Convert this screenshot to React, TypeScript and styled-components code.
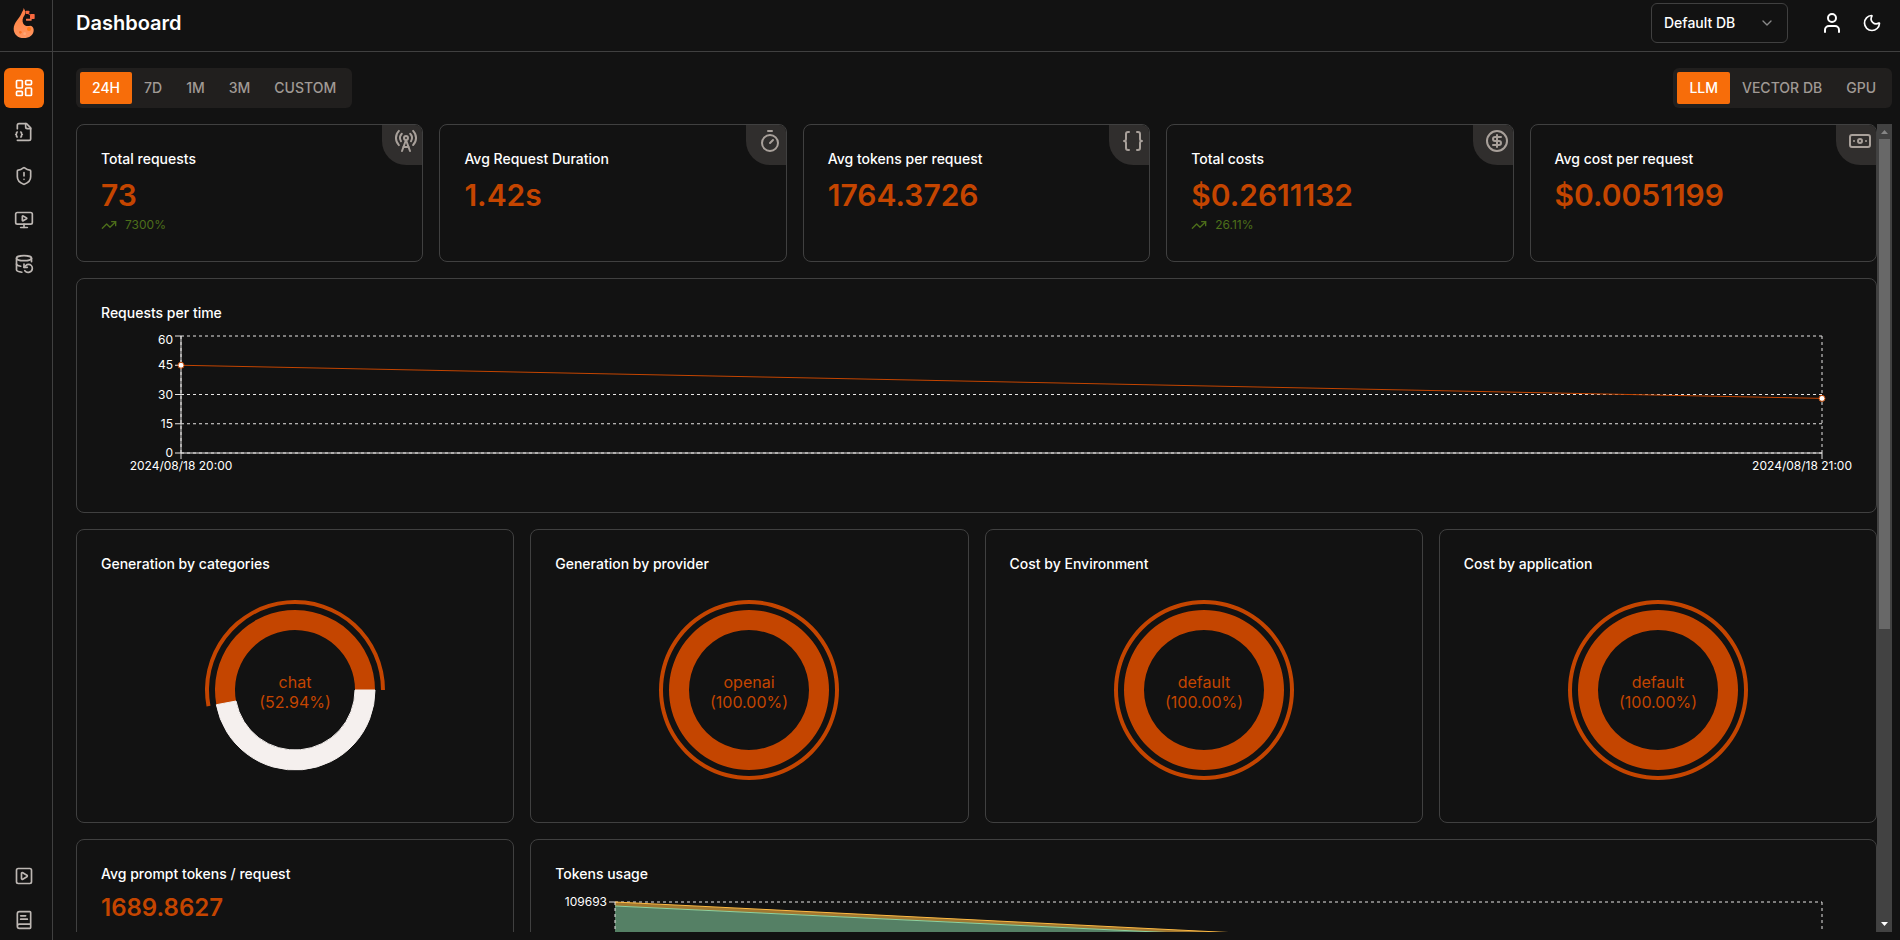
import React, { useLayoutEffect, useRef, useState } from 'react';
import styled, { createGlobalStyle, css } from 'styled-components';
import {
  Banknote,
  BookText,
  Braces,
  ChevronDown,
  CircleDollarSign,
  DatabaseBackup,
  LayoutDashboard,
  MonitorPlay,
  Moon,
  RadioTower,
  ShieldAlert,
  SquarePlay,
  Timer,
  TrendingUp,
  User,
} from 'lucide-react';

const color = {
  bg: '#121212',
  line: '#404040',
  panel: '#211f1e',
  corner: '#302e2d',
  accent: '#f76d0a',
  deep: '#c44500',
  text: '#ffffff',
  muted: '#a09a95',
  icon: '#bdb7b3',
  axis: '#e7e5e4',
  up: '#4d6f1a',
};

const GlobalStyle = createGlobalStyle`
  *, *::before, *::after { box-sizing: border-box; }
  body {
    margin: 0;
    background: ${color.bg};
    color: ${color.text};
    font-family: Inter, "Liberation Sans", sans-serif;
    font-size: 14px;
    line-height: 20px;
  }
  button, select { font: inherit; }
  h1, h2, p { margin: 0; }
  svg { display: block; }
`;

const Shell = styled.div`
  display: flex;
  height: 100vh;
  overflow: hidden;
`;

const Sidebar = styled.aside`
  flex: none;
  width: 52px;
  display: flex;
  flex-direction: column;
`;

const LogoLink = styled.a`
  flex: none;
  height: 52px;
  padding: 7px 12px 0;
  border-bottom: 1px solid ${color.line};
`;

const Nav = styled.nav`
  flex: 1;
  display: flex;
  flex-direction: column;
  gap: 4px;
  padding: 16px 4px 0;
`;

const NavSpacer = styled.div`
  flex: 1;
`;

const NavLink = styled.a<{ $active?: boolean }>`
  width: 40px;
  height: 40px;
  display: flex;
  align-items: center;
  justify-content: center;
  border-radius: 6px;
  color: ${(p) => (p.$active ? '#fff' : color.icon)};
  background: ${(p) => (p.$active ? color.accent : 'transparent')};
`;

const Main = styled.main`
  flex: 1;
  min-width: 0;
  display: flex;
  flex-direction: column;
  border-left: 1px solid ${color.line};
`;

const Header = styled.header`
  flex: none;
  height: 52px;
  display: flex;
  align-items: center;
  padding: 0 8px 5px 23px;
  border-bottom: 1px solid ${color.line};
`;

const PageTitle = styled.h1`
  flex: 1;
  font-size: 20px;
  line-height: 28px;
  font-weight: 600;
`;

const SelectBox = styled.label`
  position: relative;
  width: 137px;
  margin-right: 24px;

  select {
    width: 100%;
    height: 40px;
    padding: 0 32px 0 12px;
    appearance: none;
    color: ${color.text};
    background: ${color.bg};
    border: 1px solid ${color.line};
    border-radius: 6px;
    font-weight: 500;
  }

  svg {
    position: absolute;
    right: 13px;
    top: 12px;
    opacity: 0.5;
    pointer-events: none;
  }
`;

const IconButton = styled.button`
  width: 40px;
  height: 40px;
  display: flex;
  align-items: center;
  justify-content: center;
  padding: 0;
  border: 0;
  background: none;
  color: ${color.text};
`;

const Body = styled.div`
  flex: 1;
  min-height: 0;
  display: flex;
  flex-direction: column;
  gap: 16px;
  padding: 16px 8px 8px 23px;
`;

const Toolbar = styled.div`
  display: flex;
  justify-content: space-between;
`;

const TabGroup = styled.div`
  display: flex;
  padding: 4px;
  border-radius: 6px;
  background: ${color.panel};
`;

const Tab = styled.button<{ $active?: boolean }>`
  height: 32px;
  padding: 0 12px;
  border: 0;
  border-radius: 2px;
  font-weight: 500;
  color: ${(p) => (p.$active ? '#fff' : color.muted)};
  background: ${(p) => (p.$active ? color.accent : 'transparent')};
`;

const ScrollFrame = styled.div`
  flex: 1;
  min-height: 0;
  display: flex;
`;

const ScrollArea = styled.div`
  flex: 1;
  min-width: 0;
  display: flex;
  flex-direction: column;
  gap: 16px;
  overflow-y: auto;
  scrollbar-width: none;

  > * {
    flex: none;
  }
`;

const ScrollBar = styled.div`
  flex: none;
  width: 15px;
  display: flex;
  flex-direction: column;
  background: #424242;
`;

const ScrollTrack = styled.div`
  flex: 1;
  padding: 0 2px;
`;

const ScrollThumb = styled.div`
  height: 63%;
  background: #686868;
`;

const Row = styled.div<{ $columns: number }>`
  display: grid;
  grid-template-columns: repeat(${(p) => p.$columns}, minmax(0, 1fr));
  gap: 16px;
`;

const Card = styled.section<{ $span?: number; $minHeight?: number }>`
  position: relative;
  display: flex;
  flex-direction: column;
  padding: 24px;
  border: 1px solid ${color.line};
  border-radius: 8px;
  overflow: hidden;
  ${(p) => p.$span && css`grid-column: span ${p.$span};`}
  ${(p) => p.$minHeight && css`min-height: ${p.$minHeight}px;`}
`;

const CardTitle = styled.h2`
  font-size: 14px;
  line-height: 20px;
  font-weight: 500;
`;

const Value = styled.p<{ $small?: boolean }>`
  margin-top: 8px;
  font-size: ${(p) => (p.$small ? 24 : 30)}px;
  line-height: ${(p) => (p.$small ? 32 : 36)}px;
  font-weight: 600;
  color: ${color.deep};
`;

const Trend = styled.p`
  display: flex;
  align-items: center;
  gap: 8px;
  margin-top: 4px;
  font-size: 12px;
  line-height: 16px;
  color: ${color.up};
`;

const Corner = styled.span`
  position: absolute;
  top: 0;
  right: 0;
  padding: 4px 4px 12px 12px;
  border-bottom-left-radius: 24px;
  color: #a8a09a;
  background: ${color.corner};
`;

const ChartBox = styled.div`
  margin-top: 8px;
  font-size: 12px;
`;

const Svg = styled.svg`
  overflow: visible;
  text {
    fill: ${color.text};
  }
`;

const RingLabel = styled.text`
  font-size: 16px;
  && {
    fill: ${color.deep};
  }
`;

/** Gives the current width of an element, so charts are drawn at 1:1 scale. */
function useWidth(initial: number) {
  const ref = useRef<HTMLDivElement>(null);
  const [width, setWidth] = useState(initial);
  useLayoutEffect(() => {
    const el = ref.current;
    if (!el) return;
    const update = () => setWidth(el.clientWidth);
    update();
    const observer = new ResizeObserver(update);
    observer.observe(el);
    return () => observer.disconnect();
  }, []);
  return [ref, width] as const;
}

function Logo() {
  return (
    <svg width="24" height="32" viewBox="36 21 72 96" aria-hidden="true">
      <defs>
        <linearGradient id="flame" x1="0" y1="0" x2="0" y2="1">
          <stop offset="0" stopColor="#fb7a45" />
          <stop offset="0.5" stopColor="#ff8a4c" />
          <stop offset="1" stopColor="#ff9560" />
        </linearGradient>
      </defs>
      <path
        d="M71 24C76 32 78 38 74 45C67 54 66 64 70 71C74 78 82 80 91 77C98 78 102 85 101 92C100 105 88 114 71 114C54 114 41 103 41 86C41 68 58 55 64 41C67 34 71 31 71 24Z"
        fill="url(#flame)"
      />
      <rect x="77" y="32" width="11" height="10" rx="2" fill="#f9693f" />
      <rect x="90" y="42" width="14" height="15" rx="2" fill="#f9693f" />
      <rect x="78" y="56" width="17" height="6" rx="1" fill="#f5764a" />
      <path d="M85 42l6 3" stroke="#d9482b" strokeWidth="3" />
      <circle cx="87" cy="87" r="6" fill="#ff7a14" />
      <circle cx="61" cy="97" r="4" fill="#fb7020" />
      <circle cx="74" cy="101" r="4" fill="#ffa877" />
    </svg>
  );
}

function FileJsonIcon() {
  return (
    <svg width="20" height="20" viewBox="0 0 24 24" fill="none" stroke="currentColor" strokeWidth="2" strokeLinecap="round" strokeLinejoin="round" aria-hidden="true">
      <path d="M4 22h14a2 2 0 0 0 2-2V7l-5-5H6a2 2 0 0 0-2 2v4" />
      <path d="M14 2v4a2 2 0 0 0 2 2h4" />
      <path d="M4 12a1 1 0 0 0-1 1v1a1 1 0 0 1-1 1 1 1 0 0 1 1 1v1a1 1 0 0 0 1 1" />
      <path d="M8 18a1 1 0 0 0 1-1v-1a1 1 0 0 1 1-1 1 1 0 0 1-1-1v-1a1 1 0 0 0-1-1" />
    </svg>
  );
}

const dash = { stroke: color.axis, strokeDasharray: '3 3', fill: 'none' };
const solid = { stroke: color.axis, fill: 'none' };

function RequestsChart() {
  const [ref, width] = useWidth(1751);
  const left = 80;
  const right = width - 30;
  const top = 5;
  const bottom = 122;
  const y = (v: number) => bottom - (v / 60) * (bottom - top);
  const points = [
    { x: left, v: 45 },
    { x: right, v: 28 },
  ];
  return (
    <ChartBox ref={ref}>
      <Svg width={width} height={157} role="img" aria-label="Requests per time">
        {[0, 15, 30, 45, 60].map((v) => (
          <g key={v}>
            {v !== 45 && <line x1={left} x2={right} y1={y(v)} y2={y(v)} {...dash} />}
            <line x1={left - 6} x2={left} y1={y(v)} y2={y(v)} {...solid} />
            <text x={left - 8} y={v === 60 ? y(v) + 8 : y(v) + 4} textAnchor="end">
              {v}
            </text>
          </g>
        ))}
        <line x1={left} x2={left} y1={top} y2={bottom} {...dash} />
        <line x1={right} x2={right} y1={top} y2={bottom} {...dash} />
        <line x1={left} x2={left} y1={top} y2={bottom + 6} {...solid} />
        <line x1={left} x2={right} y1={bottom} y2={bottom} {...solid} />
        <line x1={right} x2={right} y1={bottom} y2={bottom + 6} {...solid} />
        <text x={left} y={bottom + 17} textAnchor="middle">
          2024/08/18 20:00
        </text>
        <text x={width} y={bottom + 17} textAnchor="end">
          2024/08/18 21:00
        </text>
        <line x1={points[0].x} y1={y(points[0].v)} x2={points[1].x} y2={y(points[1].v)} stroke={color.deep} />
        {points.map((p) => (
          <circle key={p.x} cx={p.x} cy={y(p.v)} r="3" fill="#fff" stroke={color.deep} />
        ))}
      </Svg>
    </ChartBox>
  );
}

/** Ring sector, angles in degrees counted anticlockwise from three o'clock. */
function sector(cx: number, cy: number, inner: number, outer: number, from: number, to: number) {
  const at = (r: number, a: number) => {
    const t = (a * Math.PI) / 180;
    return `${cx + r * Math.cos(t)} ${cy - r * Math.sin(t)}`;
  };
  const end = Math.min(to, from + 359.99);
  const large = end - from > 180 ? 1 : 0;
  return `M${at(outer, from)}A${outer} ${outer} 0 ${large} 0 ${at(outer, end)}L${at(inner, end)}A${inner} ${inner} 0 ${large} 1 ${at(inner, from)}Z`;
}

function RingChart({ name, percent, sweep }: { name: string; percent: string; sweep: number }) {
  const [ref, width] = useWidth(388);
  const cx = width / 2;
  const cy = 108;
  return (
    <ChartBox ref={ref}>
      <Svg width={width} height={216} role="img" aria-label={`${name} ${percent}`}>
        <path d={sector(cx, cy, 60, 80, 0, sweep)} fill={color.deep} />
        <path d={sector(cx, cy, 86, 90, 0, sweep)} fill={color.deep} />
        {sweep < 360 && <path d={sector(cx, cy, 60, 80, sweep, 360)} fill="#f5f0ee" stroke="#f5f0ee" />}
        <RingLabel x={cx} y={cy - 2} textAnchor="middle">
          {name}
        </RingLabel>
        <RingLabel x={cx} y={cy + 18} textAnchor="middle">
          ({percent})
        </RingLabel>
      </Svg>
    </ChartBox>
  );
}

function TokensChart() {
  const [ref, width] = useWidth(1297);
  const left = 60;
  const right = width - 30;
  const top = 10;
  const bottom = 162;
  return (
    <ChartBox ref={ref}>
      <Svg width={width} height={200} role="img" aria-label="Tokens usage">
        <line x1={left} x2={right} y1={top} y2={top} {...dash} />
        <line x1={right} x2={right} y1={top} y2={bottom} {...dash} />
        <path d={`M${left} ${top + 4}L${right} ${top + 62}V${bottom}H${left}Z`} fill="#82ca9d" fillOpacity="0.6" />
        <path d={`M${left} ${top}L${right} ${top + 60}V${top + 62}L${left} ${top + 4}Z`} fill="#ffbb44" fillOpacity="0.6" />
        <line x1={left} y1={top + 4} x2={right} y2={top + 62} stroke="#8fd3a0" />
        <line x1={left} y1={top} x2={right} y2={top + 60} stroke="#ffbb44" />
        <line x1={left} x2={left} y1={top} y2={bottom} {...dash} />
        <line x1={left - 6} x2={left} y1={top} y2={top} {...solid} />
        <text x={left - 8} y={top + 4} textAnchor="end">
          109693
        </text>
      </Svg>
    </ChartBox>
  );
}

const metrics = [
  { title: 'Total requests', value: '73', trend: '7300%', Icon: RadioTower },
  { title: 'Avg Request Duration', value: '1.42s', Icon: Timer },
  { title: 'Avg tokens per request', value: '1764.3726', Icon: Braces },
  { title: 'Total costs', value: '$0.2611132', trend: '26.11%', Icon: CircleDollarSign },
  { title: 'Avg cost per request', value: '$0.0051199', Icon: Banknote },
];

const rings = [
  { title: 'Generation by categories', name: 'chat', percent: '52.94%', sweep: 190.6 },
  { title: 'Generation by provider', name: 'openai', percent: '100.00%', sweep: 360 },
  { title: 'Cost by Environment', name: 'default', percent: '100.00%', sweep: 360 },
  { title: 'Cost by application', name: 'default', percent: '100.00%', sweep: 360 },
];

function Tabs({ items, label }: { items: string[]; label: string }) {
  const [active, setActive] = useState(items[0]);
  return (
    <TabGroup role="tablist" aria-label={label}>
      {items.map((item) => (
        <Tab key={item} type="button" role="tab" aria-selected={item === active} $active={item === active} onClick={() => setActive(item)}>
          {item}
        </Tab>
      ))}
    </TabGroup>
  );
}

export default function App() {
  return (
    <>
      <GlobalStyle />
      <Shell>
        <Sidebar>
          <LogoLink href="#home" aria-label="Home">
            <Logo />
          </LogoLink>
          <Nav aria-label="Main">
            <NavLink href="#dashboard" aria-label="Dashboard" $active>
              <LayoutDashboard size={20} />
            </NavLink>
            <NavLink href="#requests" aria-label="Requests">
              <FileJsonIcon />
            </NavLink>
            <NavLink href="#exceptions" aria-label="Exceptions">
              <ShieldAlert size={20} />
            </NavLink>
            <NavLink href="#playground" aria-label="Playground">
              <MonitorPlay size={20} />
            </NavLink>
            <NavLink href="#databases" aria-label="Databases">
              <DatabaseBackup size={20} />
            </NavLink>
            <NavSpacer />
            <NavLink href="#start" aria-label="Getting started">
              <SquarePlay size={20} />
            </NavLink>
            <NavLink href="#docs" aria-label="Documentation">
              <BookText size={20} />
            </NavLink>
          </Nav>
        </Sidebar>
        <Main>
          <Header>
            <PageTitle>Dashboard</PageTitle>
            <SelectBox>
              <select aria-label="Database" defaultValue="Default DB">
                <option>Default DB</option>
              </select>
              <ChevronDown size={16} />
            </SelectBox>
            <IconButton type="button" aria-label="Account">
              <User size={24} />
            </IconButton>
            <IconButton type="button" aria-label="Toggle theme">
              <Moon size={20} />
            </IconButton>
          </Header>
          <Body>
            <Toolbar>
              <Tabs label="Time range" items={['24H', '7D', '1M', '3M', 'CUSTOM']} />
              <Tabs label="Source" items={['LLM', 'VECTOR DB', 'GPU']} />
            </Toolbar>
            <ScrollFrame>
              <ScrollArea>
                <Row $columns={5}>
                  {metrics.map(({ title, value, trend, Icon }) => (
                    <Card key={title} $minHeight={138}>
                      <CardTitle>{title}</CardTitle>
                      <Value>{value}</Value>
                      {trend && (
                        <Trend>
                          <TrendingUp size={16} />
                          {trend}
                        </Trend>
                      )}
                      <Corner>
                        <Icon size={24} />
                      </Corner>
                    </Card>
                  ))}
                </Row>
                <Card>
                  <CardTitle>Requests per time</CardTitle>
                  <RequestsChart />
                </Card>
                <Row $columns={4}>
                  {rings.map(({ title, ...ring }) => (
                    <Card key={title}>
                      <CardTitle>{title}</CardTitle>
                      <RingChart {...ring} />
                    </Card>
                  ))}
                </Row>
                <Row $columns={4}>
                  <Card>
                    <CardTitle>Avg prompt tokens / request</CardTitle>
                    <Value $small>1689.8627</Value>
                  </Card>
                  <Card $span={3}>
                    <CardTitle>Tokens usage</CardTitle>
                    <TokensChart />
                  </Card>
                </Row>
              </ScrollArea>
              <ScrollBar aria-hidden="true">
                <svg width="15" height="15" viewBox="0 0 15 15">
                  <path d="M4 10L7.5 6L11 10Z" fill="#868686" />
                </svg>
                <ScrollTrack>
                  <ScrollThumb />
                </ScrollTrack>
                <svg width="15" height="15" viewBox="0 0 15 15">
                  <path d="M4 5L7.5 9L11 5Z" fill="#fff" />
                </svg>
              </ScrollBar>
            </ScrollFrame>
          </Body>
        </Main>
      </Shell>
    </>
  );
}
